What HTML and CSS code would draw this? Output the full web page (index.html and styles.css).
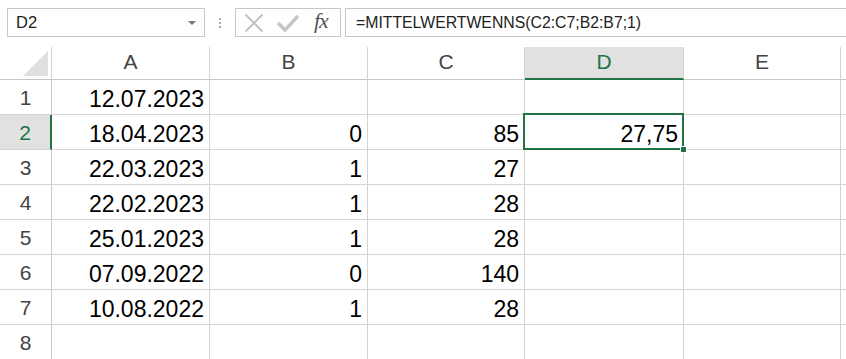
FILE: index.html
```html
<!DOCTYPE html>
<html lang="de">
<head>
<meta charset="utf-8">
<title>Excel</title>
<link rel="stylesheet" href="styles.css">
</head>
<body>
<div class="toolbar">
  <div class="namebox">
    <span class="name">D2</span>
    <span class="dropdown"></span>
  </div>
  <div class="grip"><i></i><i></i><i></i></div>
  <div class="fbuttons">
    <svg class="ico" width="20" height="20" viewBox="0 0 20 20"><path d="M1.5 1.5 L18.5 18.5 M18.5 1.5 L1.5 18.5" stroke="#c3c3c3" stroke-width="2" fill="none"/></svg>
    <svg class="ico" width="24" height="20" viewBox="0 0 24 20"><path d="M2 10 L9 17 L22 3" stroke="#c6c6c6" stroke-width="3.5" fill="none"/></svg>
    <span class="fx">fx</span>
  </div>
  <div class="formula">=MITTELWERTWENNS(C2:C7;B2:B7;1)</div>
</div>
<div class="sheet">
  <div class="grid">
    <div class="ch corner"><span class="tri"></span></div>
    <div class="ch">A</div>
    <div class="ch">B</div>
    <div class="ch">C</div>
    <div class="ch sel">D</div>
    <div class="ch">E</div>
    <div class="ch rest"></div>

    <div class="rh">1</div>
    <div class="c">12.07.2023</div><div class="c"></div><div class="c"></div><div class="c"></div><div class="c"></div><div class="c rest"></div>

    <div class="rh sel">2</div>
    <div class="c">18.04.2023</div><div class="c">0</div><div class="c">85</div><div class="c active">27,75<span class="handle"></span></div><div class="c"></div><div class="c rest"></div>

    <div class="rh">3</div>
    <div class="c">22.03.2023</div><div class="c">1</div><div class="c">27</div><div class="c"></div><div class="c"></div><div class="c rest"></div>

    <div class="rh">4</div>
    <div class="c">22.02.2023</div><div class="c">1</div><div class="c">28</div><div class="c"></div><div class="c"></div><div class="c rest"></div>

    <div class="rh">5</div>
    <div class="c">25.01.2023</div><div class="c">1</div><div class="c">28</div><div class="c"></div><div class="c"></div><div class="c rest"></div>

    <div class="rh">6</div>
    <div class="c">07.09.2022</div><div class="c">0</div><div class="c">140</div><div class="c"></div><div class="c"></div><div class="c rest"></div>

    <div class="rh">7</div>
    <div class="c">10.08.2022</div><div class="c">1</div><div class="c">28</div><div class="c"></div><div class="c"></div><div class="c rest"></div>

    <div class="rh">8</div>
    <div class="c"></div><div class="c"></div><div class="c"></div><div class="c"></div><div class="c"></div><div class="c rest"></div>
  </div>
</div>
</body>
</html>
```

FILE: styles.css
```css
* { box-sizing: border-box; }
html, body { margin: 0; padding: 0; background: #fff; overflow: hidden; }
body { font-family: "Liberation Sans", Arial, sans-serif; width: 846px; height: 359px; }

.toolbar {
  display: flex;
  align-items: flex-start;
  height: 47px;
  padding-top: 8px;
  padding-left: 7px;
}
.namebox {
  position: relative;
  width: 198px;
  height: 29px;
  border: 1px solid #c6c6c6;
  display: flex;
  align-items: center;
  padding-left: 8px;
  font-size: 16.5px;
  color: #222;
}
.dropdown {
  position: absolute;
  right: 8px;
  top: 12px;
  width: 0; height: 0;
  border-left: 4px solid transparent;
  border-right: 4px solid transparent;
  border-top: 4px solid #777;
}
.grip {
  width: 30px;
  height: 29px;
  display: flex;
  flex-direction: column;
  align-items: center;
  justify-content: center;
  gap: 2px;
}
.grip i { display: block; width: 2px; height: 2px; background: #a9a9a9; }
.fbuttons {
  width: 106px;
  height: 29px;
  border: 1px solid #c6c6c6;
  display: flex;
  align-items: center;
  padding-left: 8px;
  gap: 10px;
}
.fbuttons .ico { display: block; }
.fbuttons .ico + .ico { margin-left: 2px; }
.fx {
  font-family: "Liberation Serif", "Times New Roman", serif;
  font-style: italic;
  font-size: 22px;
  color: #555;
  margin-left: 4px;
  letter-spacing: -1px;
  padding-bottom: 3px;
}
.formula {
  margin-left: 4px;
  flex: 1;
  height: 29px;
  border: 1px solid #c6c6c6;
  border-right: none;
  display: flex;
  align-items: center;
  padding-left: 10px;
  font-size: 15.8px;
  color: #222;
}

.sheet { position: relative; }
.grid {
  display: grid;
  grid-template-columns: 52px 158px 158px 157px 159px 157px 1fr;
  grid-template-rows: 33px repeat(8, 35px);
}
.ch {
  border-right: 1px solid #d4d4d4;
  border-bottom: 1px solid #c8c8c8;
  display: flex;
  align-items: center;
  justify-content: center;
  font-size: 21px;
  color: #444;
  padding-bottom: 2px;
}
.ch.sel { background: #e1e1e1; color: #217346; border-bottom: 2px solid #217346; }
.ch.rest { border-right: none; }
.corner { position: relative; }
.tri {
  position: absolute;
  right: 3px;
  bottom: 3px;
  width: 0; height: 0;
  border-left: 25px solid transparent;
  border-bottom: 25px solid #dfdfdf;
}
.rh {
  border-right: 1px solid #c8c8c8;
  border-bottom: 1px solid #d4d4d4;
  display: flex;
  align-items: center;
  justify-content: center;
  font-size: 21px;
  color: #444;
  padding-top: 2px;
}
.rh.sel { background: #e1e1e1; color: #217346; border-right: 2px solid #217346; }
.c {
  border-right: 1px solid #d4d4d4;
  border-bottom: 1px solid #d4d4d4;
  display: flex;
  align-items: center;
  justify-content: flex-end;
  padding-right: 5px;
  padding-top: 4px;
  font-size: 23px;
  color: #000;
}
.c.rest { border-right: none; }
.c.active {
  position: relative;
}
.c.active::before {
  content: "";
  position: absolute;
  left: -2px; top: -2px; right: -1px; bottom: -1px;
  border: 2px solid #217346;
}
.handle {
  position: absolute;
  right: -4px;
  bottom: -4px;
  width: 7px;
  height: 7px;
  background: #217346;
  border: 1px solid #fff;
}
```
